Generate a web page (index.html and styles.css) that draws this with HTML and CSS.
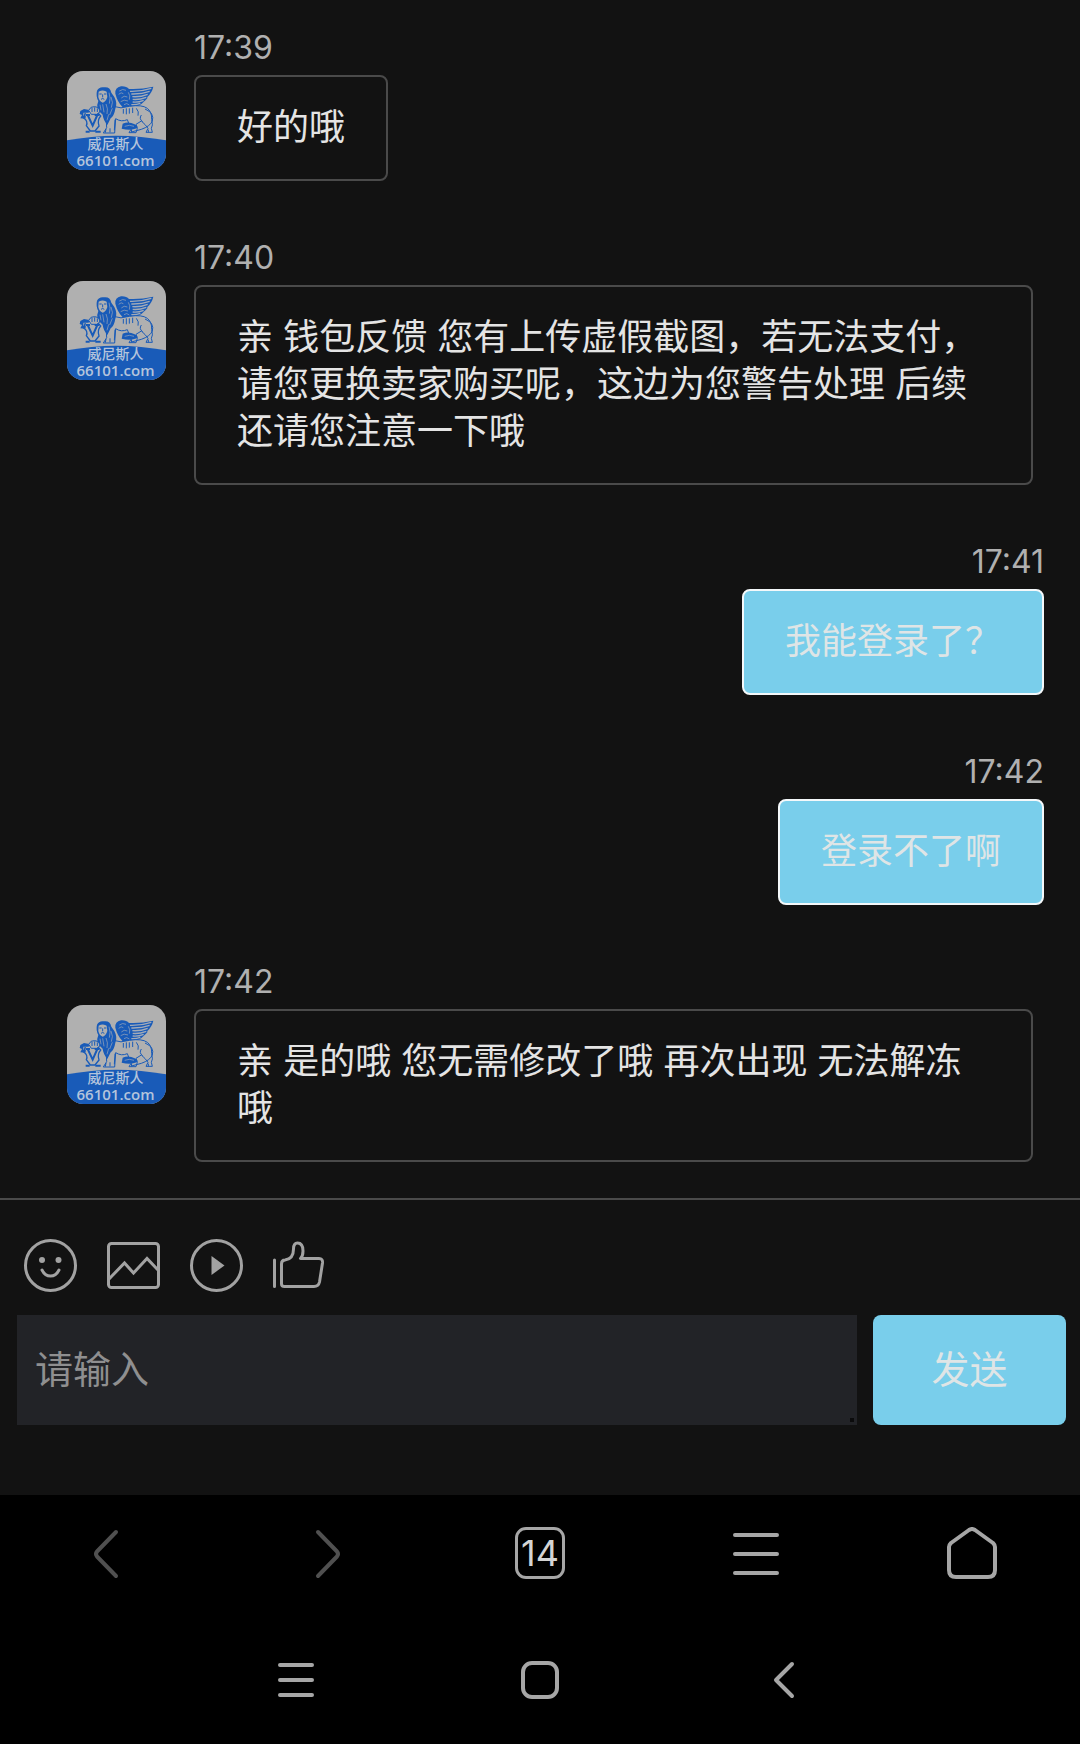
FILE: index.html
```html
<!DOCTYPE html>
<html lang="zh-CN">
<head>
<meta charset="utf-8">
<meta name="viewport" content="width=device-width, initial-scale=1">
<title>在线客服</title>
<link rel="stylesheet" href="styles.css">
</head>
<body>
<svg class="sprite" aria-hidden="true">
  <symbol id="lion" viewBox="21 18 297 297">
    <path class="logo-bg" d="M21 18h297v297H21z"/>
    <path class="logo-blue" d="M21 226Q169 198 318 226V315H21Z"/>
    <!-- wing -->
    <path class="logo-blue" d="M166 86Q164 68 183 64Q199 63 207 72Q242 74 280 65Q276 83 262 96Q264 100 258 104Q246 118 228 126L188 127Q172 110 166 86Z"/>
    <path class="logo-cut wide" d="M210 79Q244 80 274 70M214 87Q244 88 269 79M217 95Q240 97 263 88M218 103Q238 105 259 97M218 111Q234 113 251 106M214 119Q228 120 241 115"/>
    <path class="logo-cut" d="M178 78Q188 70 198 76M176 88Q184 80 190 86M184 99Q192 90 202 96M182 110Q192 102 204 108M192 119Q200 112 208 120M205 82Q212 92 208 104"/>
    <!-- body and tail -->
    <path class="logo-body" d="M160 124Q182 133 208 124Q246 118 262 130Q276 140 275 164Q280 182 274 190L277 202H258L264 190Q256 178 244 168L228 178Q236 190 228 203H207L216 188Q205 178 202 164Q184 172 167 161L164 204H130L140 188L138 150Z"/>
    <path class="logo-line" d="M255 132Q284 144 277 168Q270 184 244 193L214 201M190 132v14M199 130v18M208 130v16M218 128v16M229 130Q238 140 234 152M244 150Q236 162 248 170M150 190v12M138 192l-2 11M215 193l-1 9M265 194v8M165 164l-2 32"/>
    <path class="logo-blue" d="M188 176Q206 168 224 178Q236 184 231 190Q210 198 185 191Z"/>
    <path class="logo-cut" d="M194 184Q208 178 222 184"/>
    <!-- mane and face -->
    <path class="logo-blue" d="M111 77Q117 64 133 67Q150 65 154 83L163 96Q173 114 166 131Q163 151 152 160L142 180Q129 163 128 149L113 134Q109 120 115 108Q107 93 111 77Z"/>
    <path class="logo-face" d="M116 80Q127 73 140 80L142 96Q138 110 128 113Q117 108 115 96Z"/>
    <path class="logo-line" d="M118 87h7M132 87h7M128 88v9M123 103q5-5 10 0M116 76q12-7 24 1"/>
    <path class="logo-cut" d="M147 83Q153 100 148 116M153 96Q161 112 154 128M138 117Q145 131 141 147M128 118L132 142M157 130L149 150M120 119L123 136M146 148L141 166"/>
    <!-- paw and shield -->
    <path class="logo-blue" d="M61 138L72 132L88 135L86 143H70V152L78 154L76 161L61 160L66 150L59 147Z"/>
    <path class="logo-body" d="M86 136Q92 123 104 125Q121 127 119 142L110 148H94Z"/>
    <path class="logo-line" d="M96 129v12M104 127v13M112 130v11"/>
    <path class="logo-shield" d="M76 144L71 159Q85 168 79 182L91 198H105L117 183Q111 166 122 153L114 144"/>
    <path class="logo-vee" d="M83 150L98 182L112 150M77 150h13M104 150h13M77 200h12M106 200h16"/>
  </symbol>
</svg>

<main class="chat">
  <article class="message received">
    <time class="time">17:39</time>
    <div class="avatar">
      <svg class="logo" aria-hidden="true"><use href="#lion"/></svg>
      <div class="brand"><span class="brand-name">威尼斯人</span><span class="brand-site">66101.com</span></div>
    </div>
    <p class="bubble">好的哦</p>
  </article>
  <article class="message received">
    <time class="time">17:40</time>
    <div class="avatar">
      <svg class="logo" aria-hidden="true"><use href="#lion"/></svg>
      <div class="brand"><span class="brand-name">威尼斯人</span><span class="brand-site">66101.com</span></div>
    </div>
    <p class="bubble">亲 钱包反馈 您有上传虚假截图，若无法支付，请您更换卖家购买呢，这边为您警告处理 后续还请您注意一下哦</p>
  </article>
  <article class="message sent">
    <time class="time">17:41</time>
    <p class="bubble">我能登录了？</p>
  </article>
  <article class="message sent">
    <time class="time">17:42</time>
    <p class="bubble">登录不了啊</p>
  </article>
  <article class="message received">
    <time class="time">17:42</time>
    <div class="avatar">
      <svg class="logo" aria-hidden="true"><use href="#lion"/></svg>
      <div class="brand"><span class="brand-name">威尼斯人</span><span class="brand-site">66101.com</span></div>
    </div>
    <p class="bubble">亲 是的哦 您无需修改了哦 再次出现 无法解冻哦</p>
  </article>
</main>

<form class="composer">
  <div class="tools">
    <button class="tool" type="button" aria-label="表情">
      <svg viewBox="0 0 53 53"><circle cx="26.500" cy="26.500" r="25"/><circle class="solid" cx="18" cy="21" r="3"/><circle class="solid" cx="34.500" cy="21" r="3"/><path d="M18 31Q21 37 26.500 37T35 31"/></svg>
    </button>
    <button class="tool" type="button" aria-label="图片">
      <svg viewBox="0 0 53 53"><rect x="1.500" y="4.500" width="50" height="44" rx="3"/><path class="miter" d="M2 40L17.500 24L26.500 34L40 19.500L51 31"/></svg>
    </button>
    <button class="tool" type="button" aria-label="视频">
      <svg viewBox="0 0 53 53"><circle cx="26.500" cy="26.500" r="25"/><path class="solid" d="M21.500 17L34.500 26.500L21.500 36Z"/></svg>
    </button>
    <button class="tool" type="button" aria-label="点赞">
      <svg viewBox="0 0 53 53"><path d="M1.500 21V47.500M8.500 25Q8.500 21 12 21Q20.500 20 20.500 10Q20.500 4 24.500 4Q30 4 30 12Q30 17 27.500 19.500H46Q50 19.500 49.500 24L46.500 43Q45.500 47.500 41 47.500H11.500Q8.500 47.500 8.500 45Z"/></svg>
    </button>
  </div>
  <div class="entry">
    <div class="field"><textarea class="input" rows="1" placeholder="请输入" aria-label="请输入"></textarea></div>
    <button class="send" type="button">发送</button>
  </div>
</form>

<nav class="browser-bar" aria-label="浏览器">
  <button class="bar-button dim" type="button" aria-label="后退"><svg viewBox="0 0 52 52"><path d="M34 5L15 24.500Q13 27 15 29.500L34 49"/></svg></button>
  <button class="bar-button dim" type="button" aria-label="前进"><svg viewBox="0 0 52 52"><path d="M20 5L39 24.500Q41 27 39 29.500L20 49"/></svg></button>
  <button class="bar-button" type="button" aria-label="14 个标签页"><span class="tabs">14</span></button>
  <button class="bar-button" type="button" aria-label="菜单"><svg viewBox="0 0 52 52"><path d="M5 8H47M5 27H47M5 46H47"/></svg></button>
  <button class="bar-button" type="button" aria-label="主页"><svg viewBox="0 0 52 52"><path d="M23 3Q26 1 29 3L47 16Q49 18 49 20V43Q49 50 42 50H10Q3 50 3 43V20Q3 18 5 16Z"/></svg></button>
</nav>
<nav class="system-bar" aria-label="系统">
  <button class="system-button" type="button" aria-label="最近任务"><svg viewBox="0 0 38 38"><path d="M3 4H35M3 19H35M3 34H35"/></svg></button>
  <button class="system-button" type="button" aria-label="桌面"><svg viewBox="0 0 38 38"><rect x="2" y="2" width="34" height="34" rx="9"/></svg></button>
  <button class="system-button" type="button" aria-label="返回"><svg viewBox="0 0 38 38"><path d="M27 3L11 19L27 35"/></svg></button>
</nav>
</body>
</html>
```
FILE: styles.css
```css
* {
  box-sizing: border-box;
}

body {
  margin: 0;
  min-height: 100vh;
  display: flex;
  flex-direction: column;
  background: #121212;
  color: #e4e4e4;
  font-family: Inter, "Noto Sans CJK SC", sans-serif;
  font-size: 36px;
  line-height: 47px;
}

button {
  margin: 0;
  padding: 0;
  border: 0;
  background: none;
  color: inherit;
  font: inherit;
}

svg {
  display: block;
}

.sprite {
  position: absolute;
  width: 0;
  height: 0;
}

/* Conversation */
.chat {
  display: flex;
  flex-direction: column;
  gap: 54px;
  padding: 25px 36px 36px 67px;
}

.message {
  display: grid;
}

.received {
  grid-template-columns: 99px minmax(0, 1fr);
  column-gap: 28px;
  justify-items: start;
  align-items: start;
  padding-right: 11px;
}

.received .time {
  grid-column: 2;
}

.sent {
  justify-items: end;
}

.time {
  color: #b0b0b0;
  font-size: 32px;
  line-height: 46px;
}

.bubble {
  margin: 4px 0 0;
  padding: 27px 41px 28px;
  border: 2px solid #4a4a4a;
  border-radius: 8px;
}

.sent .bubble {
  border-color: #f4f8fa;
  background: #79ceeb;
  color: #dfe5e6;
}

/* Agent avatar: the caption lies over the blue foot of the logo */
.avatar {
  display: grid;
  width: 99px;
  height: 99px;
  border-radius: 16px;
  overflow: hidden;
}

.logo,
.brand {
  grid-area: 1 / 1;
}

.logo {
  width: 99px;
  height: 99px;
}

.brand {
  align-self: end;
  display: flex;
  flex-direction: column;
  align-items: center;
  padding: 0 2px 1px 0;
  color: #b4c4dc;
}

.brand-name {
  font: 500 14px/15px "Noto Sans CJK SC", sans-serif;
}

.brand-site {
  font: 600 15px/18px "Open Sans", sans-serif;
}

.logo-bg,
.logo-body,
.logo-face {
  fill: #b0b0b0;
}

.logo-blue {
  fill: #195bb8;
}

.logo-body,
.logo-line,
.logo-shield,
.logo-vee {
  stroke: #195bb8;
  stroke-width: 3;
}

.logo-line,
.logo-shield,
.logo-vee,
.logo-cut {
  fill: none;
}

.logo-shield {
  stroke-width: 4;
}

.logo-vee {
  stroke-width: 6;
}

.logo-cut {
  stroke: #a3abb8;
  stroke-width: 2;
}

.logo-cut.wide {
  stroke-width: 4;
}

/* Message composer */
.composer {
  display: flex;
  flex-direction: column;
  gap: 23px;
  padding: 39px 14px 70px 17px;
  border-top: 2px solid #4a4a4a;
}

.tools {
  display: flex;
  gap: 30px;
  padding-left: 7px;
}

.tool svg {
  width: 53px;
  height: 53px;
  fill: none;
  stroke: #a2a2a2;
  stroke-width: 3;
  stroke-linecap: round;
  stroke-linejoin: round;
}

.tool .solid {
  fill: #a2a2a2;
  stroke: none;
}

.tool .miter {
  stroke-linecap: butt;
  stroke-linejoin: miter;
}

.entry {
  display: flex;
  gap: 16px;
  font-size: 38px;
}

.field {
  position: relative;
  flex: 1;
}

.field::after {
  content: "";
  position: absolute;
  right: 3px;
  bottom: 3px;
  width: 4px;
  height: 4px;
  background: #0b0b0c;
}

.input {
  display: block;
  width: 100%;
  height: 110px;
  padding: 27px 18px 29px;
  border: 0;
  outline: 0;
  resize: none;
  overflow: hidden;
  background: #222327;
  color: inherit;
  font: inherit;
  line-height: 54px;
}

.input::placeholder {
  color: #8f8f90;
  opacity: 1;
}

.send {
  width: 193px;
  padding-bottom: 2px;
  border-radius: 8px;
  background: #79ceeb;
  color: #dfe5e6;
}

/* Browser and system navigation */
.browser-bar,
.system-bar {
  display: grid;
  background: #000;
}

.browser-bar {
  grid-template-columns: repeat(5, 1fr);
  padding: 32px 0 36px;
}

.system-bar {
  flex: 1;
  grid-template-columns: repeat(3, 244px);
  justify-content: center;
  align-items: center;
  min-height: 128px;
}

.bar-button,
.system-button {
  display: flex;
  justify-content: center;
}

.bar-button svg,
.system-button svg {
  fill: none;
  stroke: #a6a6a6;
  stroke-width: 4;
  stroke-linecap: round;
  stroke-linejoin: round;
}

.bar-button svg {
  width: 52px;
  height: 52px;
}

.system-button svg {
  width: 38px;
  height: 38px;
}

.bar-button.dim svg {
  stroke: #505050;
}

.tabs {
  width: 50px;
  height: 52px;
  border: 3px solid #a6a6a6;
  border-radius: 11px;
  color: #d4d4d4;
  font-size: 36px;
  line-height: 46px;
  text-align: center;
}
```
